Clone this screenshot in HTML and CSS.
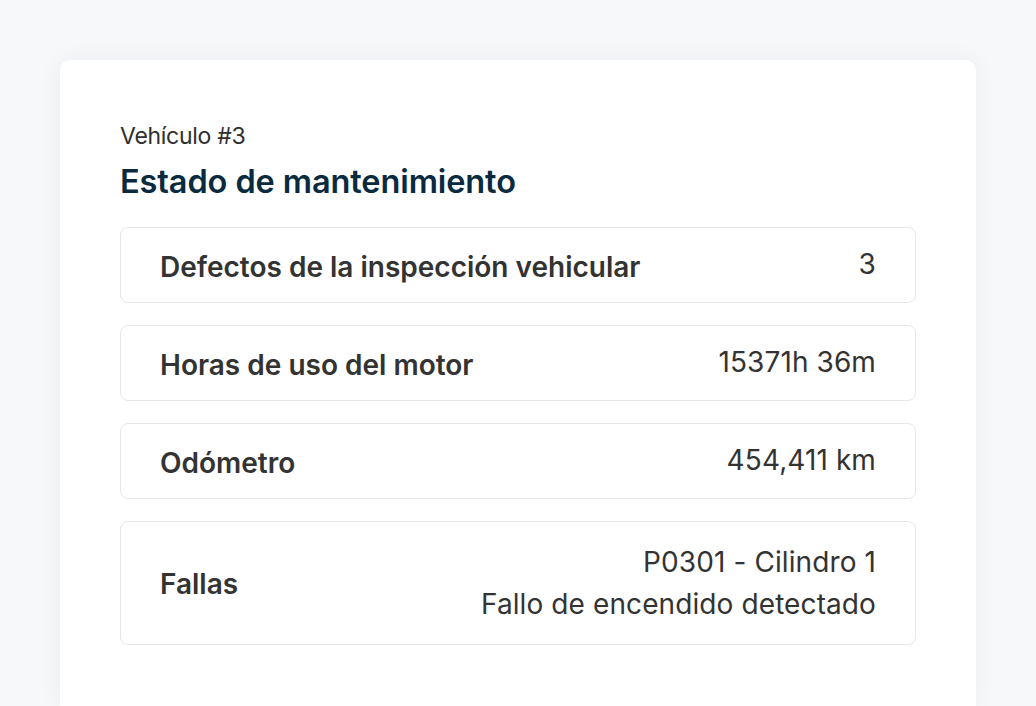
FILE: index.html
```html
<!DOCTYPE html>
<html lang="es">
<head>
<meta charset="utf-8">
<link rel="stylesheet" href="styles.css">
</head>
<body>
<div class="page">
  <div class="card">
    <div class="subtitle">Vehículo #3</div>
    <h1 class="title">Estado de mantenimiento</h1>
    <div class="rows">
      <div class="row">
        <div class="label">Defectos de la inspección vehicular</div>
        <div class="value">3</div>
      </div>
      <div class="row">
        <div class="label">Horas de uso del motor</div>
        <div class="value">15371h 36m</div>
      </div>
      <div class="row">
        <div class="label">Odómetro</div>
        <div class="value">454,411 km</div>
      </div>
      <div class="row row-multi">
        <div class="label">Fallas</div>
        <div class="value value-multi">P0301 - Cilindro 1<br>Fallo de encendido detectado</div>
      </div>
    </div>
  </div>
</div>
</body>
</html>
```
FILE: styles.css
```css
* { box-sizing: border-box; }
html, body {
  margin: 0;
  padding: 0;
  height: 100%;
  overflow: hidden;
}
body {
  background: #f7f8fa;
  font-family: Inter, "Noto Sans", sans-serif;
  color: #333333;
}
.page {
  padding: 60px 60px 0 60px;
  height: 706px;
  overflow: hidden;
}
.card {
  background: #ffffff;
  border-radius: 10px 10px 0 0;
  box-shadow: 0 0 24px rgba(20, 30, 50, 0.05);
  padding: 63px 60px 0 60px;
  height: 646px;
}
.subtitle {
  font-size: 23px;
  line-height: 26px;
  color: #2f2f2f;
  letter-spacing: -0.3px;
}
.title {
  margin: 14px 0 0 0;
  font-size: 32.5px;
  line-height: 38px;
  font-weight: 600;
  color: #0a2a40;
  letter-spacing: -0.1px;
}
.rows {
  margin-top: 26px;
  display: flex;
  flex-direction: column;
  gap: 22px;
}
.row {
  display: flex;
  justify-content: space-between;
  align-items: center;
  border: 1px solid #e5e7e9;
  border-radius: 8px;
  padding: 22px 39px 18px 39px;
  font-size: 28px;
  line-height: 34px;
}
.row-multi {
  padding: 19px 39px;
}
.label {
  font-weight: 600;
  color: #333333;
}
.value {
  color: #333333;
  text-align: right;
  margin-top: -6px;
  letter-spacing: 0.1px;
}
.value-multi {
  line-height: 42px;
  margin-top: 0;
}
.row-multi .label {
  margin-top: 2px;
}
```
